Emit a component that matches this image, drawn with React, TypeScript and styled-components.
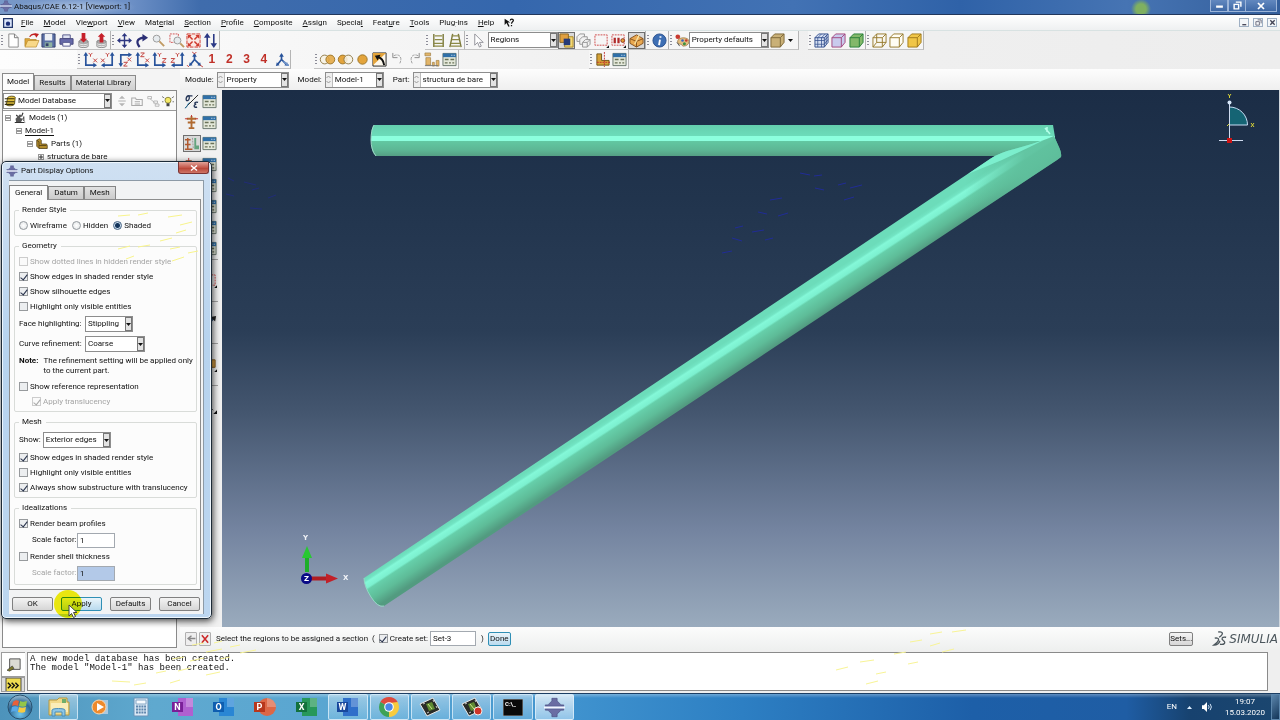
import React from "react";
import styled, { createGlobalStyle, css } from "styled-components";

const UI_FONT = `Roboto, "Open Sans", "Liberation Sans", sans-serif`;

const GlobalStyle = createGlobalStyle`
  * { box-sizing: border-box; }
  body {
    margin: 0;
    font-family: ${UI_FONT};
    font-size: 8px;
    line-height: 12px;
    color: #111;
    background: #f0f0f0;
  }
  button, input, select { font: inherit; color: inherit; margin: 0; }
  u { text-underline-offset: 1px; }
`;

/* ---------- page frame ---------- */

const Page = styled.div`
  min-height: 100vh;
  display: flex;
  flex-direction: column;
  position: relative;
  overflow: hidden;
  background: #f0f0f0;
`;

const TitleBar = styled.header`
  height: 15px;
  flex: none;
  display: flex;
  align-items: flex-start;
  border-bottom: 1px solid #22375c;
  background:
    radial-gradient(circle at calc(100% - 139px) 9px, #7fb060 0 5px, rgba(110, 165, 90, 0) 10px),
    radial-gradient(ellipse 60px 9px at 76px 7px, rgba(185, 205, 232, 0.75), rgba(185, 205, 232, 0)),
    linear-gradient(90deg, #7898c8 0, #6d90c6 130px, #3f6cac 200px, #3567ad 40%, #4272b4 62%, #2f62a8 75%, #4674b3 88%, #345f9c 100%);
`;

const TitleText = styled.h1`
  margin: 0;
  flex: 1;
  padding-left: 2px;
  font-size: 8px;
  font-weight: 400;
  line-height: 14px;
`;

const CaptionButtons = styled.div`
  display: flex;
  margin-right: 3px;
`;

const CaptionButton = styled.button<{ $wide?: boolean }>`
  width: ${(p) => (p.$wide ? 31 : 18)}px;
  height: 12px;
  padding: 0;
  display: grid;
  place-items: center;
  border: 1px solid #9bb4d8;
  border-top: 0;
  border-left-width: ${(p) => (p.$wide ? 0 : 1)}px;
  background: linear-gradient(#6288bf, #3f69a6);
`;

const MenuBar = styled.nav`
  height: 16px;
  flex: none;
  display: flex;
  align-items: center;
  padding: 0 3px;
  gap: 8px;
  background: linear-gradient(#fff, #eef0f1);
  border-bottom: 1px solid #d8e2e2;
`;

const MenuList = styled.div`
  display: flex;
  flex: 1;
  gap: 10px;
  align-items: center;
`;

const MenuItem = styled.button`
  padding: 0;
  border: 0;
  background: none;
  line-height: 14px;
`;

const ChildButton = styled.button`
  width: 10px;
  height: 9px;
  margin-left: 4px;
  padding: 0;
  display: grid;
  place-items: center;
  border: 1px solid #9fb0c4;
  background: #f3f6f9;
`;

const ChildButtons = styled.div`
  display: flex;
`;

/* ---------- toolbars ---------- */

const Toolbar = styled.div`
  height: 19px;
  flex: none;
  display: flex;
  background: linear-gradient(90deg, #fdfdfd, #f1f1f1 45%, #ededed);
`;

const ToolGroup = styled.div<{ $width: number; $before?: number }>`
  width: ${(p) => p.$width}px;
  margin-left: ${(p) => p.$before ?? 0}px;
  height: 19px;
  flex: none;
  display: flex;
  align-items: center;
  background: #f6f6f6;
  border-right: 1px solid #b5b5b5;
  border-bottom: 1px solid #c2c2c2;
`;

const Grip = styled.span`
  width: 5px;
  height: 12px;
  flex: none;
  background: radial-gradient(circle, #8c8c98 0 1px, transparent 1px) 0 0 / 4px 3px repeat-y;
`;

const ToolButton = styled.button<{ $on?: boolean }>`
  flex: 1 1 0;
  min-width: 0;
  height: 17px;
  padding: 0;
  display: grid;
  place-items: center;
  border: 1px solid ${(p) => (p.$on ? "#6f6f6f" : "transparent")};
  background: ${(p) => (p.$on ? "#d9d9d9" : "none")};
`;

const ViewNumber = styled.span`
  font-family: "Liberation Sans", Arial, sans-serif;
  font-size: 12px;
  font-weight: 700;
  color: #c03028;
`;

const Glyph = styled.svg<{ $size?: number }>`
  width: ${(p) => p.$size ?? 15}px;
  height: ${(p) => p.$size ?? 15}px;
  display: block;
  overflow: visible;
`;

/* ---------- combo box ---------- */

const ComboFrame = styled.span<{ $width: number }>`
  width: ${(p) => p.$width}px;
  height: 16px;
  flex: none;
  display: inline-flex;
  align-items: center;
  border: 1px solid #8d8d8d;
  background: #fff;
`;

const ComboSelect = styled.select`
  flex: 1;
  min-width: 0;
  height: 14px;
  padding: 0 0 0 2px;
  appearance: none;
  border: 0;
  outline: 0;
  background: none;
`;

const ComboArrow = styled.span`
  width: 7px;
  height: 14px;
  flex: none;
  display: grid;
  place-items: center;
  border: 1px solid #777;
  background: #e3e3e3;
`;

const Spinner = styled.span`
  width: 7px;
  height: 14px;
  flex: none;
  display: grid;
  place-items: center;
  border-right: 1px solid #bbb;
  background: #eee;
`;

/* ---------- workspace ---------- */

const Workspace = styled.main`
  flex: 1;
  display: flex;
  min-height: 0;
  background: #f4f4f4;
`;

const SidePanel = styled.aside`
  width: 177px;
  flex: none;
  display: flex;
  flex-direction: column;
  padding: 4px 0 2px 2px;
`;

const SideTabs = styled.div`
  display: flex;
  align-items: flex-end;
`;

const SideTab = styled.button<{ $active?: boolean }>`
  height: ${(p) => (p.$active ? 17 : 15)}px;
  padding: 0 4px;
  white-space: nowrap;
  border: 1px solid #8a8a8a;
  border-bottom: 0;
  background: ${(p) => (p.$active ? "#fcfcfc" : "linear-gradient(#e6e6e6, #cfcfcf)")};
`;

const SideBody = styled.div`
  flex: 1;
  display: flex;
  flex-direction: column;
  border: 1px solid #8a8a8a;
  background: #fff;
`;

const SideTools = styled.div`
  height: 20px;
  display: flex;
  align-items: center;
  justify-content: space-between;
  padding-right: 2px;
  border-bottom: 1px solid #9a9a9a;
  background: #f8f8f8;
`;

const Tree = styled.ul`
  margin: 0;
  padding: 0;
  list-style: none;
`;

const TreeItem = styled.li<{ $level: number }>`
  height: 13px;
  display: flex;
  align-items: center;
  gap: 3px;
  padding-left: ${(p) => 2 + p.$level * 11}px;
  white-space: nowrap;
`;

const TreeName = styled.span<{ $link?: boolean }>`
  line-height: 9px;
  border-bottom: 1px solid ${(p) => (p.$link ? "#111" : "transparent")};
`;

const Expander = styled.span`
  width: 6px;
  height: 6px;
  display: grid;
  place-items: center;
  border: 1px solid #999;
  background: #fff;
`;

const MainColumn = styled.div`
  flex: 1;
  min-width: 0;
  display: flex;
  flex-direction: column;
  padding-left: 3px;
`;

const ContextBar = styled.div`
  height: 21px;
  flex: none;
  display: flex;
  align-items: center;
  padding: 0 5px;
  gap: 9px;
  background: linear-gradient(#fdfdfd, #efefef);
`;

const ContextField = styled.label`
  display: flex;
  align-items: center;
  gap: 3px;
`;

const Stage = styled.div`
  flex: 1;
  display: flex;
`;

const Toolbox = styled.div`
  width: 42px;
  flex: none;
  display: flex;
  flex-direction: column;
  padding: 1px 4px 0 3px;
  background: #f1f1f1;
`;

const ToolboxRow = styled.div<{ $divided?: boolean }>`
  height: 21px;
  display: flex;
  align-items: center;
  ${(p) =>
    p.$divided &&
    css`
      height: 42px;
      border-top: 1px solid #a5a5a5;
    `}
`;

const Viewport = styled.section`
  flex: 1;
  min-width: 0;
  display: flex;
  background: linear-gradient(#1b2d46 0, #21344d 20%, #2b3e57 45%, #44566f 60%, #7484a0 82%, #9aabbd 100%);
  border-right: 1px solid #cfd6dc;
`;

const Scene = styled.svg`
  width: 100%;
  height: auto;
  display: block;
  font-family: "DejaVu Sans", sans-serif;
  font-size: 7px;
  font-weight: 700;
`;

const PromptBar = styled.form`
  height: 23px;
  flex: none;
  display: flex;
  align-items: center;
  gap: 2px;
  padding: 0 2px 0 5px;
  background: linear-gradient(#fcfcfc, #eef0ef);
`;

const PromptLabel = styled.label`
  display: flex;
  align-items: center;
  gap: 2px;
  padding-left: 2px;
`;

const PromptText = styled.span`
  padding: 0 2px 0 3px;
`;

const SquareButton = styled.button`
  width: 12px;
  height: 14px;
  padding: 0;
  display: grid;
  place-items: center;
  border: 1px solid #b0b0b0;
  border-radius: 1px;
  background: #eee;
`;

const PushButton = styled.button<{ $width: number; $focus?: boolean }>`
  width: ${(p) => p.$width}px;
  height: 14px;
  padding: 0;
  line-height: 12px;
  border: 1px solid ${(p) => (p.$focus ? "#2f8fb5" : "#808080")};
  border-radius: 2px;
  background: ${(p) => (p.$focus ? "linear-gradient(#eaf5fb, #b9daee)" : "linear-gradient(#f4f4f4, #d6d6d6)")};
`;

const TextBox = styled.input<{ $width: number; $off?: boolean }>`
  width: ${(p) => p.$width}px;
  height: 15px;
  padding: 0 2px;
  border: 1px solid #a3a9b0;
  border-radius: 0;
  outline: 0;
  color: #111;
  background: ${(p) => (p.$off ? "#b3c9e8" : "#fff")};
`;

const Filler = styled.span`
  flex: 1;
`;

const Brand = styled.div`
  display: flex;
  align-items: center;
  gap: 2px;
  padding-left: 18px;
  font-family: "DejaVu Sans", sans-serif;
  font-size: 12px;
  font-style: oblique;
  color: #4b565c;
`;

const MessageArea = styled.section`
  height: 43px;
  flex: none;
  display: flex;
  gap: 2px;
  padding: 2px 12px 2px 1px;
  background: #efefef;
`;

const MessageTabs = styled.div`
  width: 24px;
  display: flex;
  flex-direction: column;
`;

const MessageTab = styled.button<{ $active?: boolean }>`
  height: ${(p) => (p.$active ? 25 : 15)}px;
  flex: none;
  padding: 0;
  display: grid;
  place-items: center;
  overflow: hidden;
  border: 1px solid #9c9c9c;
  border-right: ${(p) => (p.$active ? "0" : "1px solid #9c9c9c")};
  background: ${(p) => (p.$active ? "#fff" : "#dcdcdc")};
`;

const MessageLog = styled.pre`
  flex: 1;
  margin: 0;
  padding: 2px;
  border: 1px solid #8a8a8a;
  background: #fff;
  font-family: "Liberation Mono", "Courier New", monospace;
  font-size: 9px;
  line-height: 9px;
`;

/* ---------- dialog ---------- */

const Dialog = styled.section`
  position: absolute;
  left: 1px;
  top: 161px;
  width: 211px;
  padding: 0 7px 4px;
  border: 1px solid #1d2b38;
  border-radius: 5px;
  background: linear-gradient(#cfe0f2, #b7d3ee 40%, #bcd6f0);
  box-shadow: 1px 2px 7px rgba(0, 0, 0, 0.75), inset 0 0 0 1px #eef6fd;
`;

const DialogHeader = styled.header`
  height: 18px;
  display: flex;
  align-items: center;
  gap: 3px;
  margin: 0 -5px 0 -3px;
`;

const DialogTitle = styled.h2`
  margin: 0;
  flex: 1;
  font-size: 8px;
  font-weight: 400;
`;

const CloseButton = styled.button`
  width: 31px;
  height: 12px;
  align-self: flex-start;
  padding: 0;
  display: grid;
  place-items: center;
  border: 1px solid #7c3434;
  border-top: 0;
  border-radius: 0 0 3px 3px;
  background: linear-gradient(#e0a299, #c4584a 50%, #b54032 51%, #cf7567);
`;

const DialogBody = styled.div`
  padding: 4px 2px 3px 0;
  background: #f2f3f4;
  border: 1px solid #8d9aa6;
  border-width: 1px 1px 0 0;
`;

const DialogTabs = styled.div`
  display: flex;
  align-items: flex-end;
  height: 14px;
`;

const DialogTab = styled.button<{ $active?: boolean }>`
  height: ${(p) => (p.$active ? 15 : 13)}px;
  margin-bottom: ${(p) => (p.$active ? -1 : 0)}px;
  padding: 0 5px;
  position: relative;
  border: 1px solid #858585;
  border-bottom: 0;
  background: ${(p) => (p.$active ? "#fcfcfc" : "linear-gradient(#e2e2e2, #cbcbcb)")};
`;

const DialogPanel = styled.div`
  display: flex;
  flex-direction: column;
  gap: 4px;
  padding: 4px 3px 4px 4px;
  border: 1px solid #8d8d8d;
  background: #fcfcfc;
`;

const Group = styled.fieldset`
  margin: 0;
  min-width: 0;
  padding: 2px 3px 2px 4px;
  border: 1px solid #d9dcd9;
  border-radius: 2px;
  white-space: nowrap;
`;

const GroupName = styled.legend`
  padding: 0 4px 0 3px;
  line-height: 12px;
`;

const CheckRow = styled.label<{ $off?: boolean; $inset?: boolean }>`
  height: 15px;
  display: flex;
  align-items: center;
  gap: 2px;
  padding-left: ${(p) => (p.$inset ? 13 : 0)}px;
  color: ${(p) => (p.$off ? "#a5a5a5" : "inherit")};
`;

const Tick = styled.input<{ $off?: boolean }>`
  appearance: none;
  width: 9px;
  height: 9px;
  flex: none;
  border: 1px solid ${(p) => (p.$off ? "#ccc" : "#979a9d")};
  background-color: ${(p) => (p.$off ? "#fafafa" : "#eceef0")};
  display: grid;
  place-items: center;
  &:checked::after {
    content: "";
    width: 3px;
    height: 6px;
    margin-bottom: 2px;
    border: solid ${(p) => (p.$off ? "#a8a8a8" : "#26304a")};
    border-width: 0 1px 1px 0;
    transform: rotate(38deg);
  }
`;

const RadioRow = styled.div`
  height: 15px;
  display: flex;
  align-items: center;
  gap: 5px;
`;

const RadioLabel = styled.label`
  display: flex;
  align-items: center;
  gap: 2px;
`;

const Radio = styled.input`
  appearance: none;
  width: 9px;
  height: 9px;
  border: 1px solid #93999e;
  border-radius: 50%;
  background: radial-gradient(#fff, #dfe2e4);
  &:checked {
    border-color: #476484;
    background: radial-gradient(circle, #12335a 0 2px, #c8daea 3px);
  }
`;

const FieldRow = styled.label<{ $inset?: boolean; $off?: boolean; $low?: boolean }>`
  height: ${(p) => (p.$low ? 18 : 20)}px;
  display: flex;
  align-items: center;
  gap: 2px;
  padding-left: ${(p) => (p.$inset ? 13 : 0)}px;
  color: ${(p) => (p.$off ? "#a5a5a5" : "inherit")};
`;

const FieldName = styled.span<{ $width?: number }>`
  width: ${(p) => (p.$width ? `${p.$width}px` : "auto")};
`;

const Note = styled.p`
  margin: 2px 0 3px;
  display: flex;
  gap: 5px;
  line-height: 10px;
`;

const ButtonRow = styled.div`
  display: flex;
  justify-content: space-between;
  padding: 7px 1px 0 3px;
`;

const Overlay = styled.svg<{ $left: number; $top: number; $tint?: boolean }>`
  position: absolute;
  left: ${(p) => p.$left}px;
  top: ${(p) => p.$top}px;
  pointer-events: none;
  mix-blend-mode: ${(p) => (p.$tint ? "multiply" : "normal")};
`;

/* ---------- taskbar ---------- */

const TaskBar = styled.footer`
  height: 27px;
  flex: none;
  display: flex;
  align-items: stretch;
  border-top: 1px solid #1c3e63;
  color: #fff;
  background:
    linear-gradient(rgba(255, 255, 255, 0.3), rgba(255, 255, 255, 0) 4px),
    linear-gradient(90deg, #4d93bb 0, #5fa9cf 12%, #58a5d2 30%, #3f92ce 45%, #2d7fc3 58%, #1d5fa8 76%, #1f5da4 88%, #17426f 93%, #1b466f 100%);
`;

const StartButton = styled.button`
  width: 39px;
  padding: 0;
  border: 0;
  background: none;
`;

const TaskList = styled.div`
  width: 537px;
  display: flex;
`;

const TaskButton = styled.button<{ $open?: boolean; $front?: boolean }>`
  flex: 1 1 0;
  min-width: 0;
  margin-right: 2px;
  padding: 0;
  display: grid;
  place-items: center;
  border: 1px solid ${(p) => (p.$open ? "rgba(225,242,252,0.75)" : "transparent")};
  border-radius: 2px;
  background: ${(p) =>
    p.$front
      ? "linear-gradient(rgba(255,255,255,0.75), rgba(200,230,250,0.6))"
      : p.$open
        ? "linear-gradient(rgba(255,255,255,0.4), rgba(160,215,245,0.3))"
        : "none"};
`;

const Tray = styled.div`
  margin: 0 3px 0 auto;
  display: flex;
  align-items: center;
  gap: 10px;
`;

const Clock = styled.time`
  width: 46px;
  text-align: center;
  line-height: 11px;
`;

const ShowDesktop = styled.button`
  width: 9px;
  padding: 0;
  border: 1px solid #5c86ac;
  background: linear-gradient(135deg, #5c86ac, #123458);
`;

/* ---------- drawings ---------- */

type IconProps = { size?: number };
const Svg = ({ size, children }: React.PropsWithChildren<IconProps>) => (
  <Glyph $size={size} viewBox="0 0 16 16" fill="none" aria-hidden="true">
    {children}
  </Glyph>
);

const AbaqusMark = ({ size = 12 }: IconProps) => (
  <Svg size={size}>
    <path d="M6 1h4v2l3 3h2v1H1V6h2l3-3z" fill="#6a6da3" stroke="#484c80" strokeWidth=".5" />
    <path d="M6 15h4v-2l3-3h2V9H1v1h2l3 3z" fill="#6a6da3" stroke="#484c80" strokeWidth=".5" />
    <path d="M0 8h16" stroke="#f4f4ff" strokeWidth="1.4" />
  </Svg>
);

const Down = () => (
  <svg width="5" height="3" viewBox="0 0 5 3" aria-hidden="true">
    <path d="M0 0h5L2.500 3z" fill="#111" />
  </svg>
);

const NewIcon = () => (
  <Svg>
    <path d="M3 1h6l4 4v10H3z" fill="#fff" stroke="#8a8a8a" />
    <path d="M9 1v4h4" stroke="#777" />
  </Svg>
);
const OpenIcon = () => (
  <Svg>
    <path d="M1 6h5l1 1h6v7H1z" fill="#e0a83a" stroke="#a87a1c" strokeWidth=".7" />
    <path d="M4 8h12l-3 7H1z" fill="#f8d888" stroke="#b98a2a" strokeWidth=".7" />
    <path d="M6 4c2-3 5-3 7-2" stroke="#c02020" strokeWidth="1.400" />
    <path d="M11 0l5 1-3 4z" fill="#c02020" />
  </Svg>
);
const SaveIcon = () => (
  <Svg>
    <path d="M1 1h14v14H1z" fill="#5a6fa5" stroke="#34406c" />
    <path d="M4 1h8v7H4z" fill="#eef1f5" />
    <path d="M4 10h8v5H4z" fill="#8fb2a0" />
    <path d="M5 11h3v3H5z" fill="#34406c" />
  </Svg>
);
const PrintIcon = () => (
  <Svg>
    <path d="M4 2h8v4H4z" fill="#dfe3f2" stroke="#54578c" />
    <path d="M1 6h14v6H1z" fill="#6669a8" stroke="#46487c" />
    <path d="M4 10h8v4H4z" fill="#f6f6fb" stroke="#54578c" />
  </Svg>
);
const DiscIcon = ({ up }: { up?: boolean }) => (
  <Svg>
    <path d="M3 9c0-2 10-2 10 0v5c0 2-10 2-10 0z" fill="#a9a9a9" stroke="#6d6d6d" strokeWidth=".7" />
    <path d="M3 11c1 2 9 2 10 0M3 13c1 2 9 2 10 0" stroke="#eee" />
    {up ? <path d="M8 0l4 4h-2v6H6V4H4z" fill="#c6202a" /> : <path d="M8 10l4-4h-2V0H6v6H4z" fill="#c6202a" />}
  </Svg>
);
const PanIcon = () => (
  <Svg>
    <path d="M8 2v12M2 8h12" stroke="#2e3780" strokeWidth="1.500" />
    <path d="M8 0l3 3.500H5zM8 16l3-3.500H5zM0 8l3.500-3v6zM16 8l-3.500-3v6z" fill="#2e3780" />
  </Svg>
);
const RotateIcon = () => (
  <Svg>
    <path d="M6 15C2 10 3 6 10 5" stroke="#2b2f75" strokeWidth="2.400" />
    <path d="M9 1l6 4-6 4z" fill="#2b2f75" />
  </Svg>
);
const ZoomIcon = ({ box }: { box?: boolean }) => (
  <Svg>
    {box && <path d="M1 1h9v9H1z" stroke="#d05050" strokeDasharray="2 1" />}
    <circle cx={box ? 9 : 6} cy={box ? 8 : 6} r="3.700" fill="#e6ebee" stroke="#9a9a9a" />
    <path d={box ? "M12 11l4 4" : "M9 9l5 5"} stroke="#c09a62" strokeWidth="2" />
  </Svg>
);
const FitIcon = () => (
  <Svg>
    <path d="M1 1h14v14H1z" fill="#fbe9e4" stroke="#cf3a2e" strokeDasharray="4 1" />
    <path d="M3 3l4 4M13 3L9 7M3 13l4-4M13 13L9 9" stroke="#cf3a2e" strokeWidth="1.600" />
    <path d="M2 2h4L2 6zM14 2h-4l4 4zM2 14h4l-4-4zM14 14h-4l4-4z" fill="#cf3a2e" />
  </Svg>
);
const CycleIcon = () => (
  <Svg>
    <path d="M4.500 4v11M11.500 1v11" stroke="#2c3a86" strokeWidth="1.700" />
    <path d="M4.500 0L8 5H1zM11.500 16L8 11h7z" fill="#2c3a86" />
  </Svg>
);
const LadderIcon = ({ tilt }: { tilt?: boolean }) => (
  <Svg>
    {tilt ? (
      <path d="M5 1L2 15M11 1l3 14" stroke="#7d7a3c" strokeWidth="1.500" />
    ) : (
      <path d="M3 1v14M13 1v14" stroke="#7d7a3c" strokeWidth="1.500" />
    )}
    <path d="M4 3h8M4 7h8M3 11h10M3 14h10" stroke="#8d8a46" strokeWidth="1.400" />
  </Svg>
);
const PointerIcon = () => (
  <Svg>
    <path d="M4 1v12l3-3 2 5 2-1-2-4h4z" fill="#fff" stroke="#909098" />
  </Svg>
);
const OverlapIcon = () => (
  <Svg>
    <path d="M6 4h9v11H6z" fill="#f4d870" stroke="#a68320" />
    <path d="M1 1h9v9H1z" fill="#e0a040" stroke="#8a6420" />
    <path d="M5 6h7v7H5z" fill="#253a78" />
  </Svg>
);
const GhostCubes = () => (
  <Svg>
    <path d="M1 4l3-3h5v5l-3 3H1z" fill="#f2f2f2" stroke="#949494" />
    <path d="M4 7l3-3h5v5l-3 3H4z" fill="#f2f2f2" stroke="#949494" />
    <path d="M7 10l3-3h5v5l-3 3H7z" fill="#f2f2f2" stroke="#949494" />
    <path d="M7 10h5v5M12 10l3-3" stroke="#949494" />
  </Svg>
);
const DashBox = ({ crowd }: { crowd?: boolean }) => (
  <Svg>
    <path d="M1 2h13v11H1z" stroke="#cf4848" strokeDasharray="2 1" />
    {crowd && (
      <>
        <path d="M4 5v6M8 5v6" stroke="#b02828" strokeWidth="2.400" />
        <circle cx="12.500" cy="8" r="2" fill="#e8a030" stroke="#8a3020" />
      </>
    )}
    <path d="M16 13v3h-3z" fill="#111" />
  </Svg>
);
const Cube = ({ face = "none", edge, mesh }: { face?: string; edge: string; mesh?: boolean }) => (
  <Svg>
    <path d="M1 5l4-4h10v9l-4 5H1z" fill={face} stroke={edge} />
    <path d="M1 5h10v10M11 5l4-4" stroke={edge} />
    {mesh && <path d="M4 5v10M8 5v10M1 8h10l4-4M1 12h10l4-5M4 5l4-4M8 5l4-4M13 3v9" stroke={edge} strokeWidth=".8" />}
  </Svg>
);
const PickCube = () => (
  <Svg>
    <path d="M1 6l7-4 7 4v5l-7 4-7-4z" fill="#e8a850" stroke="#84501c" />
    <path d="M1 6l7 3 7-3M8 9v6" stroke="#84501c" />
    <path d="M6 12L11 2" stroke="#f6e0a0" strokeWidth="1.500" />
  </Svg>
);
const WireCube = () => (
  <Svg>
    <path d="M1 5h10v10H1zM5 1h10v9H5zM1 5l4-4M11 5l4-4M1 15l4-5M11 15l4-5" fill="#fffbe8" fillOpacity=".4" stroke="#967a2c" />
  </Svg>
);
const InfoIcon = () => (
  <Svg>
    <circle cx="8" cy="8" r="7" fill="#3e6fb4" stroke="#2b518e" />
    <path d="M9 3.500v1.500M8.500 7l-1 6" stroke="#fff" strokeWidth="2" />
  </Svg>
);
const PaletteIcon = () => (
  <Svg>
    <path d="M3 8c1-4 12-4 12 1 0 3-3 5-6 5-2 0-1-2-3-2S2 11 3 8z" fill="#e2bd80" stroke="#8d6a36" strokeWidth=".7" />
    <circle cx="3" cy="4" r="2.500" fill="#c83a30" />
    <circle cx="8" cy="8" r="1.400" fill="#3c66c0" />
    <circle cx="12" cy="8" r="1.400" fill="#c83a30" />
    <circle cx="10" cy="11.500" r="1.600" fill="#3c9040" />
    <path d="M2 10l3 4" stroke="#555" />
  </Svg>
);
const ManagerIcon = () => (
  <Svg>
    <path d="M1 1.500h14v13H1z" fill="#e4e8da" stroke="#66756c" />
    <path d="M1 1.500h14v4H1z" fill="#3070a8" />
    <path d="M10 3.500h1M12.500 3.500h1" stroke="#fff" />
    <path d="M3 8h4M9 8h4M3 11.500h3M7.500 11.500h2M11 11.500h2" stroke="#6a7258" strokeWidth="1.400" />
  </Svg>
);

/* Origin arrows and the two axis letters of each standard view. */
const axisViews: { corner: "left" | "right" | "down"; up: string; side: string }[] = [
  { corner: "left", up: "Y", side: "X" },
  { corner: "right", up: "Y", side: "X" },
  { corner: "down", up: "X", side: "Z" },
  { corner: "left", up: "Z", side: "X" },
  { corner: "left", up: "Y", side: "Z" },
  { corner: "right", up: "Y", side: "Z" },
];
const letterPaths: Record<string, string> = {
  X: "l4 4m0-4l-4 4",
  Y: "l2 2l2-2m-2 2v2",
  Z: "h4l-4 4h4",
};

const AxisIcon = ({ kind }: { kind: number }) => {
  const blue = "#28539b";
  const { corner, up, side } = axisViews[kind];
  const shaft = { left: "M3 3v11h9", right: "M13 3v11H4", down: "M3 13V3h9" }[corner];
  const heads = {
    left: "M3 0l2.500 4h-5zM15 14l-4-2.500v5z",
    right: "M13 0l2.500 4h-5zM1 14l4-2.500v5z",
    down: "M3 16l-2.500-4h5zM15 3l-4-2.500v5z",
  }[corner];
  const upAt = { left: "M6 1", right: "M6 1", down: "M10 6" }[corner];
  const sideAt = { left: "M11 7", right: "M1 7", down: "M6 11" }[corner];
  return (
    <Svg>
      <path d={shaft} stroke={blue} strokeWidth="1.800" />
      <path d={heads} fill={blue} />
      <path d={upAt + letterPaths[up] + sideAt + letterPaths[side]} stroke="#c03a34" />
    </Svg>
  );
};
const TriadIcon = ({ custom }: { custom?: boolean }) => (
  <Svg>
    <path d="M8 8V3M8 8l-4 5M8 8l5 5" stroke="#28539b" strokeWidth="1.800" />
    <path d="M8 1l2.500 4h-5zM2 15l1-4 3 3zM15 15l-4-1 3-3z" fill="#28539b" />
    {custom ? (
      <path d="M10 10l4 3M13 14h3" stroke="#6f93c8" strokeWidth="2" />
    ) : (
      <path d="M5.500 0L8 2l2-2M0 14l2 2M14 14l3 2" stroke="#c03a34" />
    )}
  </Svg>
);

const VennIcon = ({ side }: { side: number }) => (
  <Svg>
    {side === 2 ? (
      <circle cx="8" cy="8" r="5" fill="#e3a43c" stroke="#9b7428" />
    ) : side === 1 ? (
      <>
        <circle cx="5" cy="8" r="4.700" fill="#e3a43c" stroke="#9b7428" />
        <circle cx="11" cy="8" r="4.700" fill="#f7f3e6" fillOpacity=".85" stroke="#8f7a48" />
      </>
    ) : (
      <>
        <circle cx="5" cy="8" r="4.700" fill="#f7f3e6" stroke="#8f7a48" />
        <circle cx="11" cy="8" r="4.700" fill="#e3a43c" fillOpacity=".85" stroke="#9b7428" />
      </>
    )}
  </Svg>
);
const SketchIcon = () => (
  <Svg>
    <path d="M1 1h14v14H1z" fill="#fdf8ec" stroke="#222" />
    <path d="M1 1h14L1 14z" fill="#e3a43c" />
    <path d="M13 14C12 8 10 7 6 5" stroke="#111" strokeWidth="2" />
    <path d="M3 4l6-1-3 6z" fill="#111" />
  </Svg>
);
const UndoIcon = ({ redo }: { redo?: boolean }) => (
  <Svg>
    <path d={redo ? "M12 4C6 1 2 6 6 13" : "M4 4c6-3 10 2 6 9"} stroke="#9c9c9c" strokeDasharray="3 1" />
    <path d={redo ? "M13 1v5H8" : "M3 1v5h5"} stroke="#888" />
  </Svg>
);
const BlocksIcon = () => (
  <Svg>
    <path d="M1 1h6v3H1zM2 6h5v8H2zM9 11h2v4H9zM13 9h3v6h-3z" fill="#e2b56a" stroke="#9f7d40" strokeWidth=".7" />
    <path d="M1 14.500h14" stroke="#777" />
  </Svg>
);
const BracketIcon = () => (
  <Svg>
    <path d="M2 2h5v7h8v5H2z" fill="#d5a237" stroke="#6e5318" />
    <path d="M10 0v16M2 11h14" stroke="#c03030" strokeDasharray="2 1" />
  </Svg>
);
const DatabaseIcon = () => (
  <Svg size={12}>
    <path d="M5 3c2-2 9-2 10 0l-1 9c-1 3-10 3-11 1z" fill="#e2c03c" stroke="#3c3408" />
    <path d="M1 5h13M1 9h13M1 12.500h12" stroke="#332c08" strokeWidth="1.500" />
  </Svg>
);
const StackIcon = () => (
  <Svg size={12}>
    <path d="M2 9l6-6 2 2-2 3 4 1-3 5H3z" fill="#565656" />
    <path d="M1 14h13M3 4l2 2M12 1l-2 5M13 6v6" stroke="#333" strokeWidth="1.500" />
    <path d="M11 8l4 6" stroke="#999" />
  </Svg>
);
const PartIcon = () => (
  <Svg size={12}>
    <path d="M1 3l4-2 2 2v5h7l1 2v4H4l-3-3z" fill="#b48d2c" stroke="#493810" />
    <path d="M1 3l3 2v9M4 10h10" stroke="#493810" />
  </Svg>
);
const BulbIcon = () => (
  <Svg size={12}>
    <circle cx="8" cy="7" r="4" fill="#f5ea68" stroke="#6f6820" />
    <path d="M6 11h4v4H6z" fill="#444" />
    <path d="M0 2l3 2M16 2l-3 2M0 9h2M14 9h2" stroke="#555" />
  </Svg>
);
const MaterialIcon = () => (
  <Svg>
    <path d="M1 15L15 1" stroke="#222" />
    <path d="M6 2c-4-1-5 6-2 5 2-1 2-4 1-5h4M15 9c-3-1-5 1-2 2-3 0-3 4 1 3" stroke="#235" strokeWidth="1.400" />
    <path d="M1 15c3 0 2-5 5-6" stroke="#3a86b4" />
  </Svg>
);
const SectionIcon = () => (
  <Svg>
    <path d="M8 1v12M3 4h10M4 8h8M5 14h6" stroke="#b06a30" strokeWidth="2" />
    <path d="M1 4h3M12 4h3M8 0v2" stroke="#c03030" />
  </Svg>
);
const AssignIcon = () => (
  <Svg>
    <path d="M4 2v12M1 4h6M1 9h6M1 14h8" stroke="#b05a30" strokeWidth="1.600" />
    <path d="M9 2l1 12" stroke="#999" strokeDasharray="2 1" />
    <path d="M11 2h2v8h3v4h-5z" fill="#64a47e" />
  </Svg>
);
const OrientIcon = () => (
  <Svg>
    <path d="M2 4h6v6h7v4H2z" fill="#4a9a4a" stroke="#9a4a20" />
    <path d="M5 1v12" stroke="#c03030" />
  </Svg>
);

const OfficeIcon = ({ letter, dark, light, round }: { letter: string; dark: string; light: string; round?: boolean }) => (
  <svg width="22" height="20" viewBox="0 0 22 20" aria-hidden="true">
    {round ? <circle cx="13" cy="10" r="9" fill={light} /> : <path d="M6 1h15v18H6z" fill={light} />}
    <path d={round ? "M13 10V1a9 9 0 0 1 9 9z" : "M14 1h7v9h-7z"} fill="#fff" fillOpacity=".25" />
    <path d="M0 5h11v10H0z" fill={dark} />
    <text x="5.500" y="13" textAnchor="middle" fill="#fff" fontSize="9" fontWeight="700">
      {letter}
    </text>
  </svg>
);
const FolderIcon = () => (
  <svg width="24" height="20" viewBox="0 0 24 20" aria-hidden="true">
    <path d="M2 3h8l2-2h8v4h2v13H2z" fill="#f1d98a" stroke="#b7983f" />
    <path d="M4 6h17v9H4z" fill="#faedb8" />
    <path d="M15 2h4v4h-4z" fill="#6fae6a" />
    <path d="M5 19v-6c0-2 13-2 13 0v6h-3v-4H8v4z" fill="#8cc6e6" stroke="#4b8db5" />
  </svg>
);
const MediaIcon = () => (
  <svg width="18" height="18" viewBox="0 0 18 18" aria-hidden="true">
    <path d="M6 2h11v14H6z" fill="#a9c9e0" />
    <circle cx="8" cy="9" r="7" fill="#ee8a2c" stroke="#f8d8b0" />
    <path d="M6 5l7 4-7 4z" fill="#fff" />
  </svg>
);
const CalcIcon = () => (
  <svg width="16" height="20" viewBox="0 0 16 20" aria-hidden="true">
    <path d="M1 1h14v18H1z" fill="#d9e8f5" stroke="#6b93b8" />
    <path d="M3 3h10v4H3z" fill="#f7fbff" stroke="#86a8c6" />
    <path d="M3 9.500h10M3 12.500h10M3 15.500h10" stroke="#5f86ad" strokeWidth="2" strokeDasharray="2 .7" />
  </svg>
);
const ChromeIcon = () => (
  <svg width="20" height="20" viewBox="0 0 20 20" aria-hidden="true">
    <path d="M10 10L1.340 5A10 10 0 0 1 18.660 5z" fill="#dd4b3e" />
    <path d="M10 10L18.660 5A10 10 0 0 1 10 20z" fill="#f7cb3f" />
    <path d="M10 10v10A10 10 0 0 1 1.340 5z" fill="#3fa257" />
    <path d="M10 5h8.660l-4 7z" fill="#f7cb3f" />
    <path d="M1.340 5H18.660L10 6z" fill="#dd4b3e" />
    <circle cx="10" cy="10" r="4.800" fill="#fff" />
    <circle cx="10" cy="10" r="3.700" fill="#4a86e8" />
  </svg>
);
const FilmIcon = ({ rec }: { rec?: boolean }) => (
  <svg width="22" height="20" viewBox="0 0 22 20" aria-hidden="true">
    <path d="M1 7L14 1l7 12-13 6z" fill="#2a2c28" stroke="#e8e8e8" />
    <path d="M4 7l2-1M8 16l2-1M14 3l1 2M17 9l1 2" stroke="#ccc" />
    <path d="M7 7l6-2 3 7-6 2z" fill="#5f8a32" />
    <path d="M9 7l4 5" stroke="#cfe88a" />
    {rec && <circle cx="17" cy="14" r="4" fill="#cf3528" stroke="#eee" />}
  </svg>
);
const ConsoleIcon = () => (
  <svg width="20" height="17" viewBox="0 0 20 17" aria-hidden="true">
    <path d="M0 0h20v17H0z" fill="#0a0a0a" stroke="#999" />
    <text x="2" y="7" fill="#fff" fontSize="6" fontWeight="700">
      C:\_
    </text>
  </svg>
);
const StartOrb = () => (
  <svg width="26" height="26" viewBox="0 0 26 26" aria-hidden="true">
    <defs>
      <radialGradient id="orb" cx=".5" cy=".8" r=".8">
        <stop offset="0" stopColor="#6fc5ee" />
        <stop offset=".6" stopColor="#2c6795" />
        <stop offset="1" stopColor="#9dbfd4" />
      </radialGradient>
    </defs>
    <circle cx="13" cy="13" r="12" fill="url(#orb)" stroke="#28506e" />
    <path d="M6 8c2-2 4-2 6-1l-1 5c-2-1-4-1-6 0z" fill="#e8603a" />
    <path d="M13 7c2 1 4 1 7 0l-1 5c-2 1-4 1-7 0z" fill="#94c648" />
    <path d="M5 13c2-1 4-1 6 0l-1 5c-2-1-4-1-6 0z" fill="#58a8e8" />
    <path d="M12 13c2 1 4 1 7 0l-1 5c-2 1-4 1-7 0z" fill="#f8ca40" />
  </svg>
);

/* ---------- composed parts ---------- */

const Combo = ({ name, value, width, spin, icon }: { name?: string; value: string; width: number; spin?: boolean; icon?: React.ReactNode }) => (
  <ComboFrame $width={width}>
    {icon}
    {spin && (
      <Spinner>
        <svg width="5" height="9" viewBox="0 0 5 9" aria-hidden="true">
          <path d="M.500 3l2-2 2 2M.500 6l2 2 2-2" fill="none" stroke="#999" />
        </svg>
      </Spinner>
    )}
    <ComboSelect aria-label={name} defaultValue={value}>
      <option>{value}</option>
    </ComboSelect>
    <ComboArrow>
      <Down />
    </ComboArrow>
  </ComboFrame>
);

const Check = ({ label, on, off, inset }: { label: string; on?: boolean; off?: boolean; inset?: boolean }) => (
  <CheckRow $off={off} $inset={inset}>
    <Tick type="checkbox" defaultChecked={on} disabled={off} $off={off} />
    {label}
  </CheckRow>
);

const Tool = ({ label, on, children }: React.PropsWithChildren<{ label: string; on?: boolean }>) => (
  <ToolButton type="button" aria-label={label} $on={on}>
    {children}
  </ToolButton>
);

const menus: [string, string, string][] = [
  ["", "F", "ile"],
  ["", "M", "odel"],
  ["Vie", "w", "port"],
  ["", "V", "iew"],
  ["Mat", "e", "rial"],
  ["", "S", "ection"],
  ["", "P", "rofile"],
  ["", "C", "omposite"],
  ["", "A", "ssign"],
  ["Specia", "l", ""],
  ["Feat", "u", "re"],
  ["", "T", "ools"],
  ["Plu", "g", "-ins"],
  ["", "H", "elp"],
];

const FileToolbar = () => (
  <Toolbar>
    <ToolGroup $width={111}>
      <Grip />
      <Tool label="New"><NewIcon /></Tool>
      <Tool label="Open"><OpenIcon /></Tool>
      <Tool label="Save"><SaveIcon /></Tool>
      <Tool label="Print"><PrintIcon /></Tool>
      <Tool label="Import"><DiscIcon /></Tool>
      <Tool label="Export"><DiscIcon up /></Tool>
    </ToolGroup>
    <ToolGroup $width={109}>
      <Grip />
      <Tool label="Pan"><PanIcon /></Tool>
      <Tool label="Rotate"><RotateIcon /></Tool>
      <Tool label="Magnify"><ZoomIcon /></Tool>
      <Tool label="Box zoom"><ZoomIcon box /></Tool>
      <Tool label="Auto-fit"><FitIcon /></Tool>
      <Tool label="Cycle views"><CycleIcon /></Tool>
    </ToolGroup>
    <ToolGroup $width={40} $before={205}>
      <Grip />
      <Tool label="Parallel"><LadderIcon /></Tool>
      <Tool label="Perspective"><LadderIcon tilt /></Tool>
    </ToolGroup>
    <ToolGroup $width={181}>
      <Grip />
      <Tool label="Select"><PointerIcon /></Tool>
      <Combo name="Selection filter" value="Regions" width={70} />
      <Tool label="Overlap" on><OverlapIcon /></Tool>
      <Tool label="Entities"><GhostCubes /></Tool>
      <Tool label="Drag shape"><DashBox /></Tool>
      <Tool label="Drag scope"><DashBox crowd /></Tool>
      <Tool label="Surface pick" on><PickCube /></Tool>
    </ToolGroup>
    <ToolGroup $width={23}>
      <Grip />
      <Tool label="Query"><InfoIcon /></Tool>
    </ToolGroup>
    <ToolGroup $width={130}>
      <Grip />
      <Tool label="Colors"><PaletteIcon /></Tool>
      <Combo name="Color mapping" value="Property defaults" width={80} />
      <Tool label="Translucency"><Cube face="#c9b077" edge="#7d6838" /></Tool>
      <Tool label="More"><Down /></Tool>
    </ToolGroup>
    <ToolGroup $width={58} $before={9}>
      <Grip />
      <Tool label="Mesh"><Cube face="#d5dff2" edge="#34508e" mesh /></Tool>
      <Tool label="Seeds"><Cube face="#c9cbed" edge="#a3467e" /></Tool>
      <Tool label="Native mesh"><Cube face="#83b86a" edge="#28803a" /></Tool>
    </ToolGroup>
    <ToolGroup $width={58}>
      <Grip />
      <Tool label="Wireframe"><WireCube /></Tool>
      <Tool label="Hidden"><Cube face="#fffdf4" edge="#967a2c" /></Tool>
      <Tool label="Shaded"><Cube face="#f0c648" edge="#a07a1c" /></Tool>
    </ToolGroup>
  </Toolbar>
);

const ViewToolbar = () => (
  <Toolbar>
    <ToolGroup $width={214} $before={77}>
      <Grip />
      {axisViews.map((_, k) => (
        <Tool key={k} label={`Standard view ${k + 1}`}><AxisIcon kind={k} /></Tool>
      ))}
      <Tool label="Isometric"><TriadIcon /></Tool>
      {[1, 2, 3, 4].map((n) => (
        <Tool key={n} label={`User view ${n}`}><ViewNumber>{n}</ViewNumber></Tool>
      ))}
      <Tool label="Custom view"><TriadIcon custom /></Tool>
    </ToolGroup>
    <ToolGroup $width={145} $before={23}>
      <Grip />
      <Tool label="Replace"><VennIcon side={0} /></Tool>
      <Tool label="Remove"><VennIcon side={1} /></Tool>
      <Tool label="All"><VennIcon side={2} /></Tool>
      <Tool label="Either"><SketchIcon /></Tool>
      <Tool label="Undo"><UndoIcon /></Tool>
      <Tool label="Redo"><UndoIcon redo /></Tool>
      <Tool label="Groups"><BlocksIcon /></Tool>
      <Tool label="Group manager"><ManagerIcon /></Tool>
    </ToolGroup>
    <ToolGroup $width={40} $before={130}>
      <Grip />
      <Tool label="View cut"><BracketIcon /></Tool>
      <Tool label="View cut manager"><ManagerIcon /></Tool>
    </ToolGroup>
  </Toolbar>
);

const ModelTree = () => (
  <SidePanel>
    <SideTabs>
      <SideTab type="button" $active>Model</SideTab>
      <SideTab type="button">Results</SideTab>
      <SideTab type="button">Material Library</SideTab>
    </SideTabs>
    <SideBody>
      <SideTools>
        <Combo name="Database" value="Model Database" width={109} icon={<DatabaseIcon />} />
        <Svg size={12}><path d="M8 1l4 4H4zM8 15l4-4H4z" fill="#b5b5b5" /><path d="M3 8h10" stroke="#999" /></Svg>
        <Svg size={12}><path d="M1 4h5l1 2h8v8H1zM5 9h7M5 12h7" stroke="#aaa" strokeWidth="1.400" /></Svg>
        <Svg size={12}><path d="M1 2h5v3H1zM4 5l6 5M9 8h5v3H9zM11 12h5v3h-5z" stroke="#aaa" /></Svg>
        <BulbIcon />
      </SideTools>
      <Tree>
        <TreeItem $level={0}>
          <Expander><Svg size={4}><path d="M0 8h16" stroke="#333" strokeWidth="4" /></Svg></Expander>
          <StackIcon />
          <TreeName>Models (1)</TreeName>
        </TreeItem>
        <TreeItem $level={1}>
          <Expander><Svg size={4}><path d="M0 8h16" stroke="#333" strokeWidth="4" /></Svg></Expander>
          <TreeName $link>Model-1</TreeName>
        </TreeItem>
        <TreeItem $level={2}>
          <Expander><Svg size={4}><path d="M0 8h16" stroke="#333" strokeWidth="4" /></Svg></Expander>
          <PartIcon />
          <TreeName>Parts (1)</TreeName>
        </TreeItem>
        <TreeItem $level={3}>
          <Expander><Svg size={4}><path d="M0 8h16M8 0v16" stroke="#333" strokeWidth="4" /></Svg></Expander>
          <TreeName $link>structura de bare</TreeName>
        </TreeItem>
      </Tree>
    </SideBody>
  </SidePanel>
);

const ToolboxColumn = () => (
  <Toolbox>
    <ToolboxRow><Tool label="Create material"><MaterialIcon /></Tool><Tool label="Material manager"><ManagerIcon /></Tool></ToolboxRow>
    <ToolboxRow><Tool label="Create section"><SectionIcon /></Tool><Tool label="Section manager"><ManagerIcon /></Tool></ToolboxRow>
    <ToolboxRow><Tool label="Assign section" on><AssignIcon /></Tool><Tool label="Assignment manager"><ManagerIcon /></Tool></ToolboxRow>
    {[0, 1, 2, 3, 4].map((k) => (
      <ToolboxRow key={k}><Tool label={`Property tool ${k + 1}`}><OrientIcon /></Tool><Tool label={`Property manager ${k + 1}`}><ManagerIcon /></Tool></ToolboxRow>
    ))}
    <ToolboxRow $divided><Tool label="Partition"><OrientIcon /></Tool><Tool label="Partition face"><DashBox /></Tool></ToolboxRow>
    <ToolboxRow $divided>
      <Tool label="Datum"><OrientIcon /></Tool>
      <Tool label="Datum axis"><Svg><path d="M4 12l8-8" stroke="#2d4b78" strokeWidth="2" /><path d="M15 1l-1 6-5-5z" fill="#222" /></Svg></Tool>
    </ToolboxRow>
    <ToolboxRow $divided>
      <Tool label="Repair"><OrientIcon /></Tool>
      <Tool label="Repair face"><Svg><path d="M5 3h9v8H5z" fill="#d8a044" stroke="#865c20" /><path d="M16 13v3h-3z" fill="#111" /></Svg></Tool>
    </ToolboxRow>
    <ToolboxRow $divided><Tool label="Edge"><OrientIcon /></Tool><Tool label="Edge tool"><Svg><path d="M3 3l9 9" stroke="#555" /><path d="M16 12v4h-4z" fill="#111" /></Svg></Tool></ToolboxRow>
  </Toolbox>
);

const BeamScene = () => (
  <Scene viewBox="222 90 1057 537" preserveAspectRatio="xMidYMid meet" role="img" aria-label="Beam structure">
    <defs>
      <linearGradient id="bar" x1="0" y1="125" x2="0" y2="156" gradientUnits="userSpaceOnUse">
        <stop offset="0" stopColor="#64cfae" />
        <stop offset=".35" stopColor="#6cdcba" />
        <stop offset=".36" stopColor="#8cffde" />
        <stop offset=".5" stopColor="#8cffde" />
        <stop offset=".51" stopColor="#62c8a2" />
        <stop offset=".8" stopColor="#5db795" />
        <stop offset="1" stopColor="#559f84" />
      </linearGradient>
      <linearGradient id="brace" x1="364" y1="578" x2="381" y2="604" gradientUnits="userSpaceOnUse">
        <stop offset="0" stopColor="#6cdcba" />
        <stop offset=".1" stopColor="#72e4c3" />
        <stop offset=".16" stopColor="#84f8d8" />
        <stop offset=".32" stopColor="#7cf0cf" />
        <stop offset=".38" stopColor="#66cfaa" />
        <stop offset=".7" stopColor="#5ebc98" />
        <stop offset="1" stopColor="#529b80" />
      </linearGradient>
      <linearGradient id="joint" x1="965" y1="0" x2="1025" y2="0" gradientUnits="userSpaceOnUse">
        <stop offset="0" stopColor="#5fc09d" stopOpacity="0" />
        <stop offset="1" stopColor="#5fc09d" stopOpacity=".9" />
      </linearGradient>
    </defs>
    <path d="M374 125H1053l2 12-2 19H376q-5-3-5-16t3-15z" fill="url(#bar)" />
    <path d="M374 125q-3 5-3 15t5 16" stroke="#9fd8c8" fill="none" />
    <path d="M364 578L990 159q8-6 28-11 20-5 36-12l4 9q4 8 3 12l-4 3L384 606q-6 1-13-9-7-11-7-19z" fill="url(#brace)" />
    <path d="M960 179L990 159q8-6 28-11 20-5 36-12l4 9q4 8 3 12l-4 3-97 64z" fill="url(#joint)" />
    <path d="M968 174L990 159q8-6 28-11 14-4 26-8-20 10-42 20z" fill="#80f4d4" opacity=".85" />
    <path d="M1045 128l5 6M1047 127v5" stroke="#b4ffe9" strokeWidth="1.500" />
    <path d="M364 578q0 8 7 19t13 9" stroke="#94d8c4" fill="none" />

    <path d="M307 572v-17" stroke="#1dae28" strokeWidth="4" />
    <path d="M307 546l5 12h-10z" fill="#28c832" />
    <path d="M311 578.500h18" stroke="#b01c22" strokeWidth="4" />
    <path d="M338 578.500l-12 5v-10z" fill="#c22028" />
    <circle cx="306.500" cy="578.500" r="5.500" fill="#0a0a86" />
    <text x="304" y="581" fill="#fff">Z</text>
    <text x="303" y="540" fill="#f2f4f8">Y</text>
    <text x="343" y="580" fill="#f2f4f8">X</text>

    <path d="M1229.500 107a18 18 0 0 1 18 18h-18z" fill="#156474" stroke="#c8dcf4" />
    <path d="M1229.500 102v38M1219 140.500h24" stroke="#d0dcf0" />
    <circle cx="1229.500" cy="102.500" r="2" fill="#d8e8fa" />
    <path d="M1227 138h5v5h-5z" fill="#d01414" />
    <path d="M1228 94l1.500 2 1.500-2M1229.500 96v2M1251 123l3 4M1254 123l-3 4M1227 126l2-2" stroke="#d8d238" fill="none" />

    <path
      d="M800 173l10 2M814 176l8-1M838 185l8-2M850 188l12-3M815 188l9 2M770 200l12-2M844 200l10-3M758 212l9 2M778 216l10-3M735 228l8-2M752 232l12-2M732 238l10 3M765 240l8-2M722 253l10-2"
      stroke="#202c96"
      fill="none"
    />
    <path d="M228 178l6 3M244 182l12 3M226 194l8 2M252 190l7-2M268 198l8-3M250 208l12 1" stroke="#202c78" fill="none" />
  </Scene>
);

const PartDisplayDialog = () => (
  <Dialog role="dialog" aria-label="Part Display Options">
    <DialogHeader>
      <AbaqusMark />
      <DialogTitle>Part Display Options</DialogTitle>
      <CloseButton type="button" aria-label="Close">
        <Svg size={8}><path d="M2 3l12 10M14 3L2 13" stroke="#fff" strokeWidth="3" /></Svg>
      </CloseButton>
    </DialogHeader>
    <DialogBody>
      <DialogTabs>
        <DialogTab type="button" $active>General</DialogTab>
        <DialogTab type="button">Datum</DialogTab>
        <DialogTab type="button">Mesh</DialogTab>
      </DialogTabs>
      <DialogPanel>
        <Group>
          <GroupName>Render Style</GroupName>
          <RadioRow>
            <RadioLabel><Radio type="radio" name="style" />Wireframe</RadioLabel>
            <RadioLabel><Radio type="radio" name="style" />Hidden</RadioLabel>
            <RadioLabel><Radio type="radio" name="style" defaultChecked />Shaded</RadioLabel>
          </RadioRow>
        </Group>
        <Group>
          <GroupName>Geometry</GroupName>
          <Check label="Show dotted lines in hidden render style" off />
          <Check label="Show edges in shaded render style" on />
          <Check label="Show silhouette edges" on />
          <Check label="Highlight only visible entities" />
          <FieldRow><FieldName $width={64}>Face highlighting:</FieldName><Combo value="Stippling" width={48} /></FieldRow>
          <FieldRow><FieldName $width={64}>Curve refinement:</FieldName><Combo value="Coarse" width={60} /></FieldRow>
          <Note>
            <strong>Note:</strong>
            <span>The refinement setting will be applied only<br />to the current part.</span>
          </Note>
          <Check label="Show reference representation" />
          <Check label="Apply translucency" on off inset />
        </Group>
        <Group>
          <GroupName>Mesh</GroupName>
          <FieldRow><FieldName>Show:</FieldName><Combo value="Exterior edges" width={68} /></FieldRow>
          <Check label="Show edges in shaded render style" on />
          <Check label="Highlight only visible entities" />
          <Check label="Always show substructure with translucency" on />
        </Group>
        <Group>
          <GroupName>Idealizations</GroupName>
          <Check label="Render beam profiles" on />
          <FieldRow $low $inset><FieldName $width={43}>Scale factor:</FieldName><TextBox $width={38} defaultValue="1" /></FieldRow>
          <Check label="Render shell thickness" />
          <FieldRow $low $inset $off><FieldName $width={43}>Scale factor:</FieldName><TextBox $width={38} $off defaultValue="1" /></FieldRow>
        </Group>
      </DialogPanel>
      <ButtonRow>
        <PushButton type="button" $width={41}>OK</PushButton>
        <PushButton type="button" $width={41} $focus>Apply</PushButton>
        <PushButton type="button" $width={41}>Defaults</PushButton>
        <PushButton type="button" $width={41}>Cancel</PushButton>
      </ButtonRow>
    </DialogBody>
  </Dialog>
);

const Marks = () => (
  <>
    <Overlay $left={110} $top={205} width="100" height="60" aria-hidden="true">
      <path
        d="M8 11l12-1M28 10l10-2M58 12l14-2M70 20l12-3M66 28l10-3M50 36l12-3M60 44l10-2M28 42l12-2M8 44l12-3M16 54l8-3M62 56l12-4M78 48l10-2"
        stroke="#f8f48c"
        fill="none"
      />
    </Overlay>
    <Overlay $left={110} $top={635} width="160" height="60" aria-hidden="true">
      <path
        d="M82 10l12-2M104 8l8-2M96 17l16-3M120 12l10-2M62 24l12-2M80 26l14-3M110 24l10-2M130 18l16-3M46 38l10-2M68 36l12-3M96 40l14-3M2 46l18 1M24 50l12-2M60 48l10-3"
        stroke="#f8f496"
        fill="none"
      />
    </Overlay>
    <Overlay $left={830} $top={628} width="150" height="62" aria-hidden="true">
      <path
        d="M100 6l12-2M122 4l14-2M80 14l12-2M100 18l10-3M64 26l12-2M112 24l12-3M30 34l14-2M78 36l10-2M6 42l12-3M46 46l10-2M36 56l12-3"
        stroke="#f8f496"
        fill="none"
      />
    </Overlay>
    <Overlay $left={54} $top={590} $tint width="28" height="28" aria-hidden="true">
      <circle cx="14" cy="14" r="14" fill="#f6f210" />
    </Overlay>
    <Overlay $left={68} $top={604} width="12" height="14" aria-hidden="true">
      <path d="M1 1v11l2.500-2.500 2 4 2-1-2-4H9z" fill="#fff" stroke="#444" />
    </Overlay>
  </>
);

export default function App() {
  return (
    <Page>
      <GlobalStyle />
      <TitleBar>
        <AbaqusMark />
        <TitleText>Abaqus/CAE 6.12-1 [Viewport: 1]</TitleText>
        <CaptionButtons>
          <CaptionButton type="button" aria-label="Minimize"><Svg size={9}><path d="M2 10h12" stroke="#fff" strokeWidth="4" /></Svg></CaptionButton>
          <CaptionButton type="button" aria-label="Restore"><Svg size={9}><path d="M5 2h9v8M2 6h8v8H2z" stroke="#fff" strokeWidth="2.500" /></Svg></CaptionButton>
          <CaptionButton type="button" aria-label="Close" $wide><Svg size={8}><path d="M2 2l12 12M14 2L2 14" stroke="#fff" strokeWidth="3.500" /></Svg></CaptionButton>
        </CaptionButtons>
      </TitleBar>
      <MenuBar>
        <Svg size={10}><path d="M1 1h14v14H1z" fill="#dce6fa" stroke="#24386c" strokeWidth="2" /><circle cx="8" cy="9" r="3.500" fill="#1d2f78" /></Svg>
        <MenuList>
          {menus.map(([before, key, after]) => (
            <MenuItem type="button" key={before + key + after}>{before}<u>{key}</u>{after}</MenuItem>
          ))}
          <Svg size={10}>
            <path d="M1 1v10l3-3 3 6 2-1-3-6h4z" fill="#111" />
            <path d="M10 4c0-3 5-3 5 0 0 2-3 2-3 5M12 11v2" stroke="#111" strokeWidth="2" />
          </Svg>
        </MenuList>
        <ChildButtons>
          <ChildButton type="button" aria-label="Minimize viewport"><Svg size={7}><path d="M3 13h9" stroke="#445" strokeWidth="3" /></Svg></ChildButton>
          <ChildButton type="button" aria-label="Restore viewport"><Svg size={7}><path d="M6 2h8v8M2 6h8v8H2z" stroke="#667" strokeWidth="2" /></Svg></ChildButton>
          <ChildButton type="button" aria-label="Close viewport"><Svg size={7}><path d="M3 3l10 10M13 3L3 13" stroke="#445" strokeWidth="3" /></Svg></ChildButton>
        </ChildButtons>
      </MenuBar>
      <FileToolbar />
      <ViewToolbar />

      <Workspace>
        <ModelTree />
        <MainColumn>
          <ContextBar>
            <ContextField>Module:<Combo value="Property" width={72} spin /></ContextField>
            <ContextField>Model:<Combo value="Model-1" width={59} spin /></ContextField>
            <ContextField>Part:<Combo value="structura de bare" width={85} spin /></ContextField>
          </ContextBar>
          <Stage>
            <ToolboxColumn />
            <Viewport><BeamScene /></Viewport>
          </Stage>
          <PromptBar onSubmit={(e) => e.preventDefault()}>
            <SquareButton type="button" aria-label="Previous step"><Svg size={9}><path d="M15 8H4M8 3L2 8l6 5" stroke="#888" strokeWidth="2.500" /></Svg></SquareButton>
            <SquareButton type="button" aria-label="Cancel procedure"><Svg size={10}><path d="M3 2l10 12M13 2L3 14" stroke="#cc2a2a" strokeWidth="2.500" /></Svg></SquareButton>
            <PromptText>Select the regions to be assigned a section</PromptText>
            <span>(</span>
            <PromptLabel><Tick type="checkbox" defaultChecked />Create set:</PromptLabel>
            <TextBox $width={46} defaultValue="Set-3" aria-label="Set name" />
            <PromptText>)</PromptText>
            <PushButton type="submit" $width={23} $focus>Done</PushButton>
            <Filler />
            <PushButton type="button" $width={24}>Sets...</PushButton>
            <Brand>
              <Svg size={14}>
                <path d="M6 0c5-1 7 2 1 6M2 7c6-1 6 3-1 8 4 0 6-2 7-5M15 6c-5-1-6 2-3 4s1 5-4 4" stroke="#4b565c" strokeWidth="1.500" />
              </Svg>
              SIMULIA
            </Brand>
          </PromptBar>
        </MainColumn>
      </Workspace>

      <MessageArea>
        <MessageTabs>
          <MessageTab type="button" $active aria-label="Messages">
            <Svg size={14}><path d="M3 1h12v12H3z" fill="#dcdcd4" stroke="#444" /><path d="M0 14l6-5 2 3-5 3z" fill="#7d7a2c" stroke="#333" strokeWidth=".7" /></Svg>
          </MessageTab>
          <MessageTab type="button" aria-label="Command line">
            <Svg size={15}><path d="M0 0h16v16H0z" fill="#f0dc50" stroke="#444" /><path d="M2 5l3 3-3 3M6 5l3 3-3 3M10 5l3 3-3 3" stroke="#111" strokeWidth="1.500" /></Svg>
          </MessageTab>
        </MessageTabs>
        <MessageLog>{`A new model database has been created.\nThe model "Model-1" has been created.`}</MessageLog>
      </MessageArea>

      <TaskBar>
        <StartButton type="button" aria-label="Start"><StartOrb /></StartButton>
        <TaskList>
          <TaskButton type="button" aria-label="Explorer" $open><FolderIcon /></TaskButton>
          <TaskButton type="button" aria-label="Media Player"><MediaIcon /></TaskButton>
          <TaskButton type="button" aria-label="Calculator"><CalcIcon /></TaskButton>
          <TaskButton type="button" aria-label="OneNote"><OfficeIcon letter="N" dark="#7a1f98" light="#b060d0" /></TaskButton>
          <TaskButton type="button" aria-label="Outlook"><OfficeIcon letter="O" dark="#0f5eb0" light="#2a86d4" /></TaskButton>
          <TaskButton type="button" aria-label="PowerPoint"><OfficeIcon letter="P" dark="#b8371c" light="#dd6746" round /></TaskButton>
          <TaskButton type="button" aria-label="Excel"><OfficeIcon letter="X" dark="#12713c" light="#27985a" /></TaskButton>
          <TaskButton type="button" aria-label="Word" $open><OfficeIcon letter="W" dark="#17479c" light="#2f6fca" /></TaskButton>
          <TaskButton type="button" aria-label="Chrome" $open><ChromeIcon /></TaskButton>
          <TaskButton type="button" aria-label="Camtasia" $open><FilmIcon /></TaskButton>
          <TaskButton type="button" aria-label="Camtasia Recorder" $open><FilmIcon rec /></TaskButton>
          <TaskButton type="button" aria-label="Command prompt" $open><ConsoleIcon /></TaskButton>
          <TaskButton type="button" aria-label="Abaqus" $open $front><AbaqusMark size={21} /></TaskButton>
        </TaskList>
        <Tray>
          <span>EN</span>
          <svg width="5" height="3" viewBox="0 0 5 3" aria-hidden="true"><path d="M0 3h5L2.500 0z" fill="#dfefff" /></svg>
          <Svg size={10}><path d="M0 5h3l5-5v16l-5-5H0z" fill="#fff" /><path d="M10 5q3 3 0 6M13 3q4 5 0 10" stroke="#dfefff" strokeWidth="1.500" /></Svg>
          <Clock>19:07<br />15.03.2020</Clock>
        </Tray>
        <ShowDesktop type="button" aria-label="Show desktop" />
      </TaskBar>
      <PartDisplayDialog />
      <Marks />
    </Page>
  );
}
